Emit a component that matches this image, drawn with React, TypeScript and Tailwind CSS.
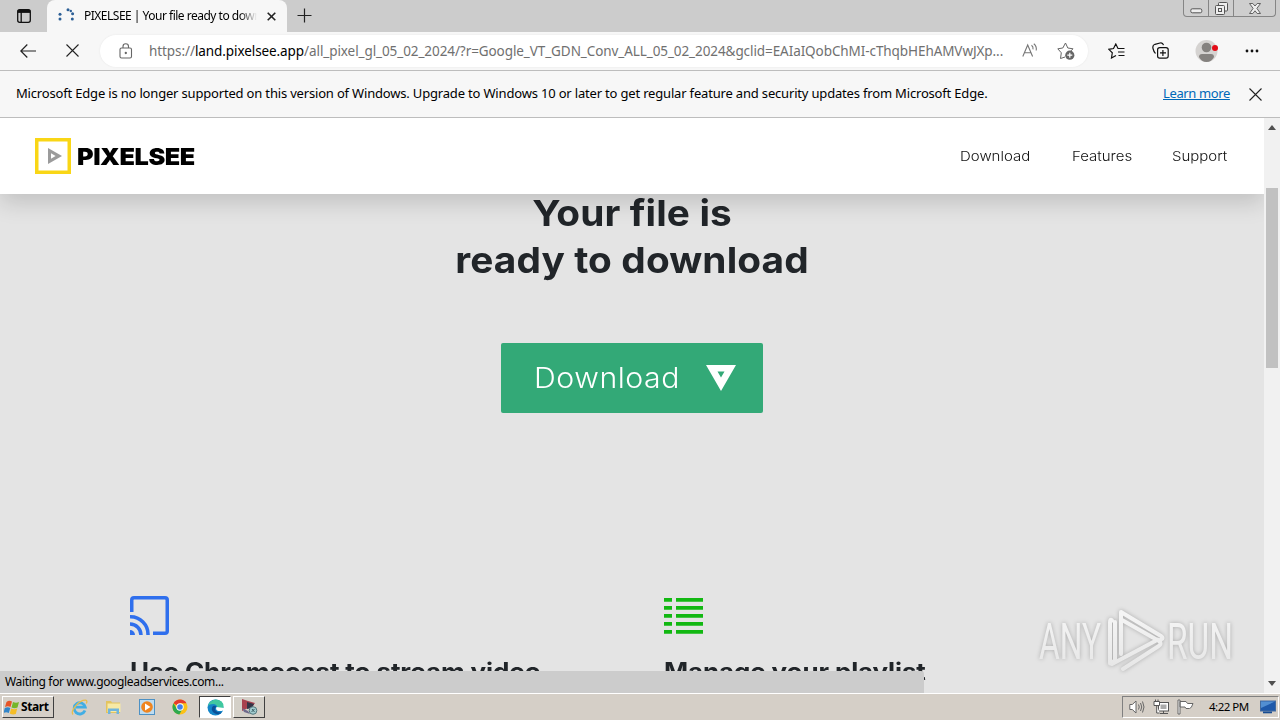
import type { ReactNode } from "react";

const NAV_LINKS = [
  { label: "Download", className: "w-[72px]" },
  { label: "Features", className: "w-[60px]" },
  { label: "Support", className: "w-[57px]" },
];

function TabStrip() {
  return (
    <div className="flex h-8 shrink-0 items-start bg-[#cccccc]">
      <div className="flex h-8 w-[47px] items-center justify-center rounded-br-md">
        <svg width="16" height="16" viewBox="0 0 16 16" fill="none" stroke="#111" strokeWidth="1.3">
          <rect x="1.7" y="1.7" width="12.6" height="12.6" rx="2" />
          <path d="M1.7 3.4h12.6" strokeWidth="3" />
          <path d="M5.2 4v10" />
        </svg>
      </div>
      <div className="flex h-8 w-60 items-center rounded-t-lg bg-[#f7f7f7] pl-[11px]">
        <svg width="17" height="16" viewBox="0 0 17 16" fill="#2c5f96" className="shrink-0">
          <circle cx="2" cy="6.2" r="1.5" />
          <circle cx="2" cy="11" r="1.5" />
          <circle cx="10" cy="1.8" r="1.5" />
          <circle cx="12.8" cy="3" r="1.2" />
          <circle cx="14.6" cy="5.7" r="1.5" />
          <circle cx="14.3" cy="11" r="1.5" />
        </svg>
        <span className="ml-[9px] w-[173px] overflow-hidden bg-linear-to-r from-black from-90% to-transparent bg-clip-text text-[12px] tracking-[-0.5px] whitespace-nowrap text-transparent">
          PIXELSEE | Your file ready to download
        </span>
        <svg width="9" height="9" viewBox="0 0 9 9" stroke="#222" strokeWidth="1.6" className="ml-[10px] shrink-0">
          <path d="M.7.7l7.6 7.6M8.3.7L.7 8.3" />
        </svg>
      </div>
      <svg width="15" height="15" viewBox="0 0 15 15" stroke="#222" strokeWidth="1.2" className="mt-[8px] ml-[10px]">
        <path d="M7.5 .5v14M.5 7.5h14" />
      </svg>
      <div className="mr-1 ml-auto flex h-[17px] rounded-b-[4px] border border-t-0 border-[#858585] bg-[#cecece]">
        <div className="flex w-[25px] items-center justify-center border-r border-[#858585]">
          <svg width="13" height="6" viewBox="0 0 13 6" fill="#eee" stroke="#555" className="mt-[5px]">
            <rect x=".8" y=".8" width="11" height="4" rx="1.5" />
          </svg>
        </div>
        <div className="flex w-[25px] items-center justify-center border-r border-[#858585]">
          <svg width="13" height="13" viewBox="0 0 13 13" fill="#eee" stroke="#555">
            <rect x="3.5" y=".5" width="9" height="8.5" rx="1" />
            <rect x=".5" y="3.5" width="9" height="9" rx="1" />
            <rect x="3.5" y="6.5" width="3" height="3" />
          </svg>
        </div>
        <div className="flex w-[41px] items-center justify-center">
          <svg width="12" height="11" viewBox="0 0 12 11" fill="#eee" stroke="#555" strokeWidth=".9">
            <path d="M.5.5h3.3L6 3 8.2.5h3.3L7.9 5.4l3.6 5.1H8.2L6 7.8l-2.2 2.7H.5l3.6-5.1z" />
          </svg>
        </div>
      </div>
    </div>
  );
}

function Toolbar() {
  return (
    <div className="flex h-[39px] shrink-0 items-center border-b border-[#bdbdbd] bg-[#f7f7f7] pb-px">
      <svg width="16" height="14" viewBox="0 0 16 14" fill="none" stroke="#222" strokeWidth="1.2" className="ml-5">
        <path d="M7.3.5L.8 7l6.5 6.5M.8 7H16" />
      </svg>
      <svg width="13" height="13" viewBox="0 0 13 13" stroke="#222" strokeWidth="1.1" className="ml-[30px]">
        <path d="M.5.5l12 12M12.5.5l-12 12" />
      </svg>
      <div className="ml-[21px] flex h-8 w-[988px] items-center rounded-full bg-white shadow-[0_0_2px_#e5e5e5]">
        <svg width="14" height="16" viewBox="0 0 14 16" fill="none" stroke="#666" strokeWidth="1.1" className="ml-[19px] shrink-0">
          <rect x="1" y="5" width="11.5" height="10" rx="1.5" />
          <path d="M4 5V3.5a2.75 2.75 0 0 1 5.5 0V5" />
          <circle cx="6.8" cy="10" r=".6" fill="#666" />
        </svg>
        <span className="ml-4 w-[856px] pt-px text-[13.5px] tracking-[-0.082px] whitespace-nowrap text-[#707070]">
          https://<span className="text-black">land.pixelsee.app</span>
          /all_pixel_gl_05_02_2024/?r=Google_VT_GDN_Conv_ALL_05_02_2024&amp;gclid=EAIaIQobChMI-cThqbHEhAMVwJXp...
        </span>
        <svg width="16" height="15" viewBox="0 0 16 15" fill="none" stroke="#777" strokeWidth="1.1" className="ml-[17px] shrink-0">
          <path d="M.8 13.5L5.7 2l4.9 11.5M2.5 9.7h6.4" />
          <path d="M9.5 2.3q2 1.5 1.5 4M11.8.7q3.2 2.6 2.4 6.8" />
        </svg>
        <svg width="18" height="18" viewBox="0 0 18 18" fill="none" stroke="#666" className="ml-[19px] shrink-0">
          <path d="M8 15l-4.5 1.5.8-5.7L.8 6.8l5-.8L8.5 1l2.3 5 5.2.8-2.5 2.5" />
          <circle cx="12.8" cy="13.2" r="4.6" fill="#666" stroke="none" />
          <path d="M12.8 10.7v5M10.3 13.2h5" stroke="#fff" strokeWidth="1.2" />
        </svg>
      </div>
      <svg width="17" height="16" viewBox="0 0 17 16" fill="none" stroke="#111" strokeWidth="1.2" className="ml-5">
        <path d="M16.5 5.5H10L7.8 1 5.5 5.5.8 6.3l3.5 3.5-.8 5.2L8 12.5M10 9h6.5M10.5 12.5h6" />
      </svg>
      <svg width="17" height="17" viewBox="0 0 17 17" fill="none" stroke="#111" strokeWidth="1.2" className="ml-[27px]">
        <rect x="5.6" y="5.6" width="10.6" height="10.6" rx="2.2" />
        <path d="M10.9 8v6M8 10.9h6M3.5 11.5C2 10.5 1.5 8.5 1 6.5.4 4 .8 3 3 2.3L8 1c2-.5 3 .3 3.5 2.2" />
      </svg>
      <svg width="24" height="24" viewBox="0 0 24 24" className="ml-[26px]">
        <circle cx="11.5" cy="12" r="11" fill="#d5d3d1" />
        <circle cx="11.5" cy="8.5" r="4.8" fill="#85827f" />
        <path d="M4 18q0-3 3-3h9q3 0 3 3-2.5 5-7.5 5T4 18z" fill="#85827f" />
        <circle cx="20" cy="9" r="3" fill="#e30b17" />
      </svg>
      <svg width="14" height="4" viewBox="0 0 14 4" fill="#111" className="ml-[26px]">
        <circle cx="2" cy="2" r="1.4" />
        <circle cx="7" cy="2" r="1.4" />
        <circle cx="12" cy="2" r="1.4" />
      </svg>
    </div>
  );
}

function InfoBar() {
  return (
    <div className="flex h-[47px] shrink-0 items-center border-b border-[#bdbdbd] bg-[#f7f7f7] pl-4 text-[13px]">
      <span className="tracking-[-0.178px] whitespace-nowrap text-black">
        Microsoft Edge is no longer supported on this version of Windows. Upgrade to Windows 10 or later to get regular
        feature and security updates from Microsoft Edge.
      </span>
      <a className="ml-auto w-[68px] tracking-[-0.38px] whitespace-nowrap text-[#0067b8] underline">Learn more</a>
      <svg width="13" height="13" viewBox="0 0 13 13" stroke="#222" strokeWidth="1.1" className="mr-[18px] ml-[18px]">
        <path d="M.5.5l12 12M12.5.5l-12 12" />
      </svg>
    </div>
  );
}

function SiteHeader() {
  return (
    <header className="relative z-10 flex h-[76px] shrink-0 items-center bg-white pr-[35px] pl-[35px] shadow-[0_8px_22px_rgba(0,0,0,0.16)]">
      <svg width="36" height="36" viewBox="0 0 36 36">
        <rect x="1.75" y="1.75" width="32.5" height="32.5" fill="none" stroke="#f9d616" strokeWidth="3.5" />
        <path fillRule="evenodd" d="M13 10l14 8-14 8zM16 15.2v5.6l4.6-2.8z" fill="#9b9b9b" />
      </svg>
      <span className="mt-px ml-[6px] origin-left scale-x-[1.075] font-['Inter',sans-serif] text-[23.5px] leading-9 font-black tracking-[-0.4px] text-black">
        PIXELSEE
      </span>
      <nav className="ml-auto flex gap-10 pt-px font-['Inter',sans-serif] text-[13.5px] font-light whitespace-nowrap text-[#111]">
        {NAV_LINKS.map((link) => (
          <a key={link.label} className={link.className}>
            <span className="inline-block origin-left scale-x-[1.11]">{link.label}</span>
          </a>
        ))}
      </nav>
    </header>
  );
}

function Features() {
  return (
    <div className="mt-[182px] grid grid-cols-[534px_534px] pl-[130px] font-['Inter',sans-serif] text-[24px] leading-7 font-bold whitespace-nowrap text-[#212529]">
      <div>
        <svg width="39" height="39" viewBox="0 0 39 39" fill="none" stroke="#2f6fed" strokeWidth="3.5">
          <path d="M1.75 16V4q0-2.25 2.25-2.25h31q2.25 0 2.25 2.25v31q0 2.25-2.25 2.25H23" />
          <path d="M0 20.8A17.5 17.5 0 0 1 18 39M0 28A11 11 0 0 1 11 39" />
          <path d="M0 34a5 5 0 0 1 5 5H0z" fill="#2f6fed" stroke="none" />
        </svg>
        <h2 className="mt-[23px] w-max origin-left scale-x-[1.085] tracking-[-0.1px]">Use Chromecast to stream video</h2>
      </div>
      <div>
        <svg width="39" height="39" viewBox="0 0 39 39" fill="#12b812">
          {[2, 10, 18, 26, 34].map((y) => (
            <path key={y} d={`M0 ${y}h8v3.7H0zM12 ${y}h27v3.7H12z`} />
          ))}
        </svg>
        <h2 className="mt-[23px] w-max origin-left scale-x-[1.08] tracking-[-0.1px]">Manage your playlist</h2>
      </div>
    </div>
  );
}

function Watermark() {
  return (
    <svg
      width="206"
      height="70"
      viewBox="0 0 206 70"
      className="absolute top-[487px] left-[1035px] drop-shadow-[0_0_2px_rgba(0,0,0,0.25)]"
    >
      <defs>
        <linearGradient id="sheen" gradientUnits="userSpaceOnUse" x1="0" y1="5" x2="0" y2="65">
          <stop offset="0" stopColor="#f6f6f6" />
          <stop offset=".5" stopColor="#eeeeee" />
          <stop offset="1" stopColor="#e6e6e6" />
        </linearGradient>
      </defs>
      <g fill="url(#sheen)" fontFamily="Roboto, sans-serif" fontSize="50" fontWeight="400">
        <text x="4" y="53.5" textLength="62" lengthAdjust="spacingAndGlyphs">ANY</text>
        <text x="132" y="53.5" textLength="66" lengthAdjust="spacingAndGlyphs">RUN</text>
      </g>
      <g fill="none" stroke="url(#sheen)" strokeWidth="4" strokeLinecap="round" strokeLinejoin="round">
        <path d="M77 15.5q-2-2-2 2v41l5-3V17" />
        <path d="M86 49V7l40 24q3 2 0 3.5l-2 1.5L87 15" />
        <path d="M77 59l46-24.5q5 4 0 7L88 64" />
      </g>
    </svg>
  );
}

function PageView() {
  return (
    <div className="flex h-[575px] shrink-0">
      <main className="relative w-[1264px] overflow-hidden bg-[#e4e4e4]">
        <SiteHeader />
        <h1 className="-mt-1 scale-x-[1.078] text-center font-['Inter',sans-serif] text-[36px] leading-[47px] font-bold tracking-[0.1px] text-[#212529]">
          Your file is
          <br />
          ready to download
        </h1>
        <button
          type="button"
          className="mx-auto mt-[59px] flex h-[70px] w-[262px] items-center rounded-[2px] bg-[#33a977] pl-[33px] font-['Inter',sans-serif] text-[28px] font-light text-white"
        >
          <span className="w-[146px] origin-left scale-x-[1.08] text-left tracking-[0.5px]">Download</span>
          <svg width="30" height="26" viewBox="0 0 30 26" className="ml-[26px]">
            <path fillRule="evenodd" d="M0 0h30L15 26zM11.5 6.5L15 12.5l3.5-6z" fill="#fff" />
          </svg>
        </button>
        <div className="pt-px">
          <Features />
        </div>
        <Watermark />
        <div className="absolute bottom-0 left-0 flex h-[22px] w-[924px] items-center rounded-tr-[3px] bg-[#cccccc] pl-[5px] text-[12px] tracking-[-0.34px] text-black">
          Waiting for www.googleadservices.com...
        </div>
      </main>
      <div className="flex w-4 flex-col items-center bg-[#f1f1f1]">
        <svg width="8" height="5" viewBox="0 0 8 5" className="mt-[7px]" fill="#505050">
          <path d="M4 0l4 5H0z" />
        </svg>
        <div className="mt-[58px] h-[180px] w-3 bg-[#c1c1c1]" />
        <svg width="8" height="5" viewBox="0 0 8 5" className="mt-auto mb-[7px]" fill="#505050">
          <path d="M0 0h8L4 5z" />
        </svg>
      </div>
    </div>
  );
}

function TaskButton({ active, children }: { active?: boolean; children: ReactNode }) {
  return (
    <div
      className={`flex h-[22px] w-8 items-center justify-center border ${
        active
          ? "border-t-[#404040] border-r-white border-b-white border-l-[#404040] bg-white"
          : "border-t-white border-r-[#404040] border-b-[#404040] border-l-white bg-[#d4d0c8]"
      }`}
    >
      {children}
    </div>
  );
}

function QuickLaunch() {
  return (
    <div className="ml-[17px] flex items-center gap-[17px]">
      <svg width="17" height="17" viewBox="0 0 17 17" fill="none">
        <path d="M14 11.5a5.6 5.6 0 1 1 .3-3.3H5" stroke="#42aee4" strokeWidth="2.8" />
        <path d="M2 15.5C-1 12 8 1 14.5 1.2c2 .2 1.5 2 .8 3.3" stroke="#e8bd4c" strokeWidth="1.3" />
      </svg>
      <svg width="17" height="16" viewBox="0 0 17 16">
        <path d="M1 2h5l1 1.5h8V14H1z" fill="#e3c45f" />
        <path d="M2.5 4.5h13V13h-13z" fill="#f7e9a5" />
        <path d="M3 15V9.5h11V15h-2.5v-3h-6v3z" fill="#71b5dc" />
      </svg>
      <svg width="16" height="16" viewBox="0 0 16 16">
        <rect x=".5" y=".5" width="15" height="15" fill="#bedcf0" stroke="#4d91c4" />
        <circle cx="8" cy="8" r="5.8" fill="#ef8520" />
        <path d="M6 4.5L11.5 8 6 11.5z" fill="#fff" />
      </svg>
      <svg width="16" height="16" viewBox="0 0 16 16">
        <circle cx="8" cy="8" r="7.5" fill="#fbc116" />
        <path d="M8 8L1.5 4.2A7.5 7.5 0 0 1 14.5 4.2H8z" fill="#e33b2e" />
        <path d="M1.5 4.2A7.5 7.5 0 0 0 7.3 15.5L10.5 10 8 8 4.8 9.8z" fill="#2da94f" />
        <circle cx="8" cy="8" r="3.7" fill="#fff" />
        <circle cx="8" cy="8" r="2.8" fill="#3f80ed" />
      </svg>
    </div>
  );
}

function Tray() {
  return (
    <div className="mr-px ml-auto flex h-[22px] w-[157px] items-center border border-t-[#808080] border-r-white border-b-white border-l-[#808080] pl-[6px]">
      <svg width="16" height="14" viewBox="0 0 16 14" fill="#fff" stroke="#666">
        <path d="M.8 4.5h2.5L7 1v12L3.3 9.5H.8z" />
        <path d="M9.5 4.5q1.5 2.5 0 5M11.5 3q2.5 4 0 8M13.5 1.5q3 5.5 0 11" fill="none" />
      </svg>
      <svg width="17" height="16" viewBox="0 0 17 16" fill="#fff" stroke="#555" className="ml-[8px]">
        <rect x="5.5" y="3.5" width="10" height="8.5" />
        <path d="M7.5 5.5h6V10h-6z" fill="#aaa" stroke="none" />
        <path d="M7 14.5h8M10.5 12v2.5M1 2.5h5.5v4H1zM2.5 2.5V.5M5 2.5V.5M3.7 6.5V14h3" />
      </svg>
      <svg width="17" height="16" viewBox="0 0 17 16" fill="#fff" stroke="#666" className="ml-[7px]">
        <path d="M1 1h2v14H1zM3 2.5h6l1.5 2H16q-1.5 5-3.5 5H9l-1-1.5H3z" />
      </svg>
      <span className="ml-[15px] w-10 text-[11.5px] tracking-[-0.5px] whitespace-nowrap text-black">4:22 PM</span>
      <svg width="16" height="14" viewBox="0 0 16 14" className="ml-[11px]">
        <rect x=".5" y="1" width="15" height="10" fill="#1e59aa" stroke="#446b9d" />
        <path d="M1 1.5h14L1 8z" fill="#528fd2" />
        <path d="M3 11.5h9v1.8H3z" fill="#174c92" />
      </svg>
    </div>
  );
}

function Taskbar() {
  return (
    <div className="flex h-[27px] shrink-0 items-center border-t border-white bg-[#d5cfc7] pl-[2px]">
      <div className="flex h-[22px] w-[52px] items-center border border-t-white border-r-[#404040] border-b-[#404040] border-l-white pl-px text-[12px] font-bold tracking-[-0.4px] text-black">
        <svg width="16" height="15" viewBox="0 0 16 15" className="mr-px shrink-0">
          <path d="M2.5 2Q5 0 8 1.5L6.5 7Q4 5.5 1 7z" fill="#e75528" />
          <path d="M9 2q3 1.5 6 0l-1.5 5.5q-3 1.5-6 0z" fill="#76b62b" />
          <path d="M.8 8q3-1.5 5.5 0l-1.5 5Q2 11.5-.5 13z" fill="#3185c9" />
          <path d="M7.2 8.5q3 1.5 6 0L11.8 14q-3 1-6-.5z" fill="#f5bd26" />
        </svg>
        Start
      </div>
      <QuickLaunch />
      <div className="ml-[11px] flex gap-[2px]">
        <TaskButton active>
          <svg width="17" height="17" viewBox="0 0 17 17">
            <circle cx="8.5" cy="8.5" r="8" fill="#1485c8" />
            <path d="M.7 7Q3 .5 9 .5q7.5.5 7.5 7-.5 3.5-5 3.5-2 0-1-2Q10 5 6 5 2.5 5 .7 7z" fill="#40c8a0" />
            <path d="M6 7q-3 3.5 1 7 4 2.5 8-.5-5 .5-6.5-2T8.8 8.5Q10 5.8 6 7z" fill="#0b4f96" />
            <path d="M9.5 8q-1.5 3 2 4 3 .3 4.5-.5l1 1V9z" fill="#fff" />
          </svg>
        </TaskButton>
        <TaskButton>
          <svg width="17" height="16" viewBox="0 0 17 16">
            <path d="M1 0l6 2 7 2-3 4-4 1-6 3z" fill="#a8404e" />
            <path d="M6 3l7 2-2 4-5 1z" fill="#353447" />
            <path d="M1 9l6 3 2 3-6-2z" fill="#6f6a8c" />
            <circle cx="12" cy="11.5" r="3.8" fill="#a2cccf" stroke="#52767c" />
            <path d="M10.5 13l3-3M11 10l2.5 3" stroke="#395d64" />
          </svg>
        </TaskButton>
      </div>
      <Tray />
    </div>
  );
}

export default function App() {
  return (
    <div className="flex h-[720px] w-[1280px] flex-col overflow-hidden font-['Noto_Sans','Open_Sans',sans-serif]">
      <TabStrip />
      <Toolbar />
      <InfoBar />
      <PageView />
      <Taskbar />
    </div>
  );
}
